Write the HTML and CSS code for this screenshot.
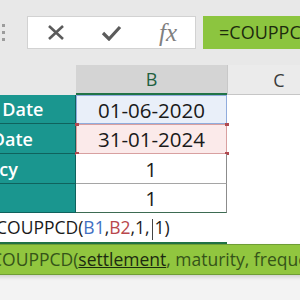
FILE: index.html
```html
<!DOCTYPE html>
<html lang="en">
<head>
    <meta charset="UTF-8">
    <meta name="viewport" content="width=device-width, initial-scale=1.0">
    <title>COUPPCD</title>
    <link rel="stylesheet" href="styles.css">
</head>
<body>

    <!-- Formula bar -->
    <div class="toolbar">
        <div class="grip"><span></span><span></span><span></span></div>
        <div class="fbox">
            <svg class="ico" width="18" height="17" viewBox="0 0 18 17">
                <path d="M2 2 L16 15 M16 2 L2 15" stroke="#5b5b5b" stroke-width="2.6" fill="none"/>
            </svg>
            <svg class="ico" width="21" height="16" viewBox="0 0 21 16">
                <path d="M2 8 L8 14 L19 2" stroke="#5b5b5b" stroke-width="3.2" fill="none"/>
            </svg>
            <span class="fx">fx</span>
        </div>
        <div class="fline">=COUPPCD(B1,B2,1,1)</div>
    </div>

    <!-- Sheet, scrolled a bit to the right -->
    <div class="sheet">
        <div class="grid">
            <div class="hd">A</div>
            <div class="hd sel">B</div>
            <div class="hd col-c">C</div>

            <div class="lbl">Settlement Date</div>
            <div class="val blue">01-06-2020</div>
            <div class="empty"></div>

            <div class="lbl">Maturity Date</div>
            <div class="val red">31-01-2024</div>
            <div class="empty"></div>

            <div class="lbl">Frequency</div>
            <div class="val">1</div>
            <div class="empty"></div>

            <div class="lbl"></div>
            <div class="val last">1</div>
            <div class="empty"></div>
        </div>

        <div class="edit">
            <div class="edit-cell">=COUPPCD(<span class="ref-b1">B1</span>,<span class="ref-b2">B2</span>,1,<span class="caret"></span>1)</div>
            <div class="empty"></div>
        </div>

        <div class="tip">COUPPCD(<u>settlement</u>, maturity, frequency, [basis])</div>
        <div class="rest"></div>
    </div>

</body>
</html>
```

FILE: styles.css
```css
body {
    margin: 0;
    width: 300px;
    height: 300px;
    overflow: hidden;
    background-color: #e8e8e8;
    font-family: "Open Sans", Arial, sans-serif;
}

/* formula bar */
.toolbar {
    display: flex;
    height: 65px;
    padding-top: 16px;
    box-sizing: border-box;
}

.grip {
    width: 27px;
    padding: 8px 0 0 2px;
    box-sizing: border-box;
    display: flex;
    flex-direction: column;
    gap: 4px;
}

.grip span {
    width: 3px;
    height: 3px;
    background-color: #9c9c9c;
}

.fbox {
    width: 169px;
    height: 33px;
    box-sizing: border-box;
    background-color: #fff;
    border: 1px solid #d2d2d2;
    display: flex;
    align-items: center;
    padding-left: 19px;
    gap: 36px;
}

.fx {
    font-family: "Liberation Serif", serif;
    font-style: italic;
    font-size: 25px;
    color: #808080;
    line-height: 1;
    margin-left: 1px;
}

.fline {
    flex: 1;
    margin-left: 7px;
    height: 33px;
    background-color: #8cc53f;
    color: #1d2b0e;
    font-size: 18px;
    line-height: 33px;
    padding-left: 16px;
    white-space: nowrap;
    overflow: hidden;
}

/* sheet */
.sheet {
    margin-left: -130px;
    width: 460px;
}

.grid {
    display: grid;
    grid-template-columns: 206px 151px 103px;
    grid-template-rows: 30px 29px 30px 30px 29px;
}

.grid > div {
    box-sizing: border-box;
    display: flex;
    align-items: center;
    justify-content: center;
    white-space: nowrap;
}

.hd {
    font-size: 18px;
    color: #3a3a3a;
}

.hd.sel {
    background-color: #d4d4d4;
    color: #22603f;
    border-bottom: 2px solid #217346;
}

.hd.col-c {
    background-color: #ebebeb;
    border-left: 1px solid #c8c8c8;
    border-bottom: 1px solid #c6c6c6;
}

.lbl {
    background-color: #1a968f;
    color: #fff;
    font-weight: 600;
    font-size: 18px;
    border-bottom: 1px solid #0f625d;
    border-right: 1px solid #0f625d;
    overflow: hidden;
}

.val {
    position: relative;
    background-color: #fff;
    color: #1a1a1a;
    font-size: 20.5px;
    border-bottom: 1px solid #a5a5a5;
    border-right: 1px solid #8c8c8c;
}

.val.blue {
    background-color: #e9eff9;
    border: 1px solid #90acdd;
}

.val.red {
    background-color: #fbeaea;
    border: 1px solid #d8a0a0;
}

/* little handles on the range border */
.val.red::before,
.val.red::after {
    content: "";
    position: absolute;
    left: -2px;
    width: 4px;
    height: 3px;
    background-color: #b04a50;
    box-shadow: 150px 0 0 #b04a50;
}

.val.red::before {
    top: -2px;
}

.val.red::after {
    bottom: -2px;
}

.val.last {
    border-bottom: 1px solid #3d6b52;
}

.empty {
    background-color: #fff;
}

/* cell being edited */
.edit {
    display: grid;
    grid-template-columns: 357px 103px;
    height: 31px;
}

.edit-cell {
    background-color: #fff;
    border-bottom: 2px solid #217346;
    padding-left: 116px;
    font-size: 17.5px;
    line-height: 29px;
    color: #1a1a1a;
    white-space: nowrap;
}

.ref-b1 {
    color: #3f6fc2;
}

.ref-b2 {
    color: #b9474c;
}

.caret {
    display: inline-block;
    width: 1px;
    height: 21px;
    margin: 0 2px;
    background-color: #444;
    vertical-align: middle;
}

.tip {
    height: 31px;
    box-sizing: border-box;
    background-color: #91c63f;
    border-top: 1px solid #6f9d35;
    border-bottom: 1px solid #6f9d35;
    box-shadow: 0 2px 4px rgba(0, 0, 0, 0.15);
    padding-left: 121px;
    font-size: 17.5px;
    line-height: 29px;
    color: #355419;
    white-space: nowrap;
    overflow: hidden;
    position: relative;
}

.tip u {
    color: #1c2a10;
}

.rest {
    height: 30px;
    background-color: #f3f3f3;
}
```
